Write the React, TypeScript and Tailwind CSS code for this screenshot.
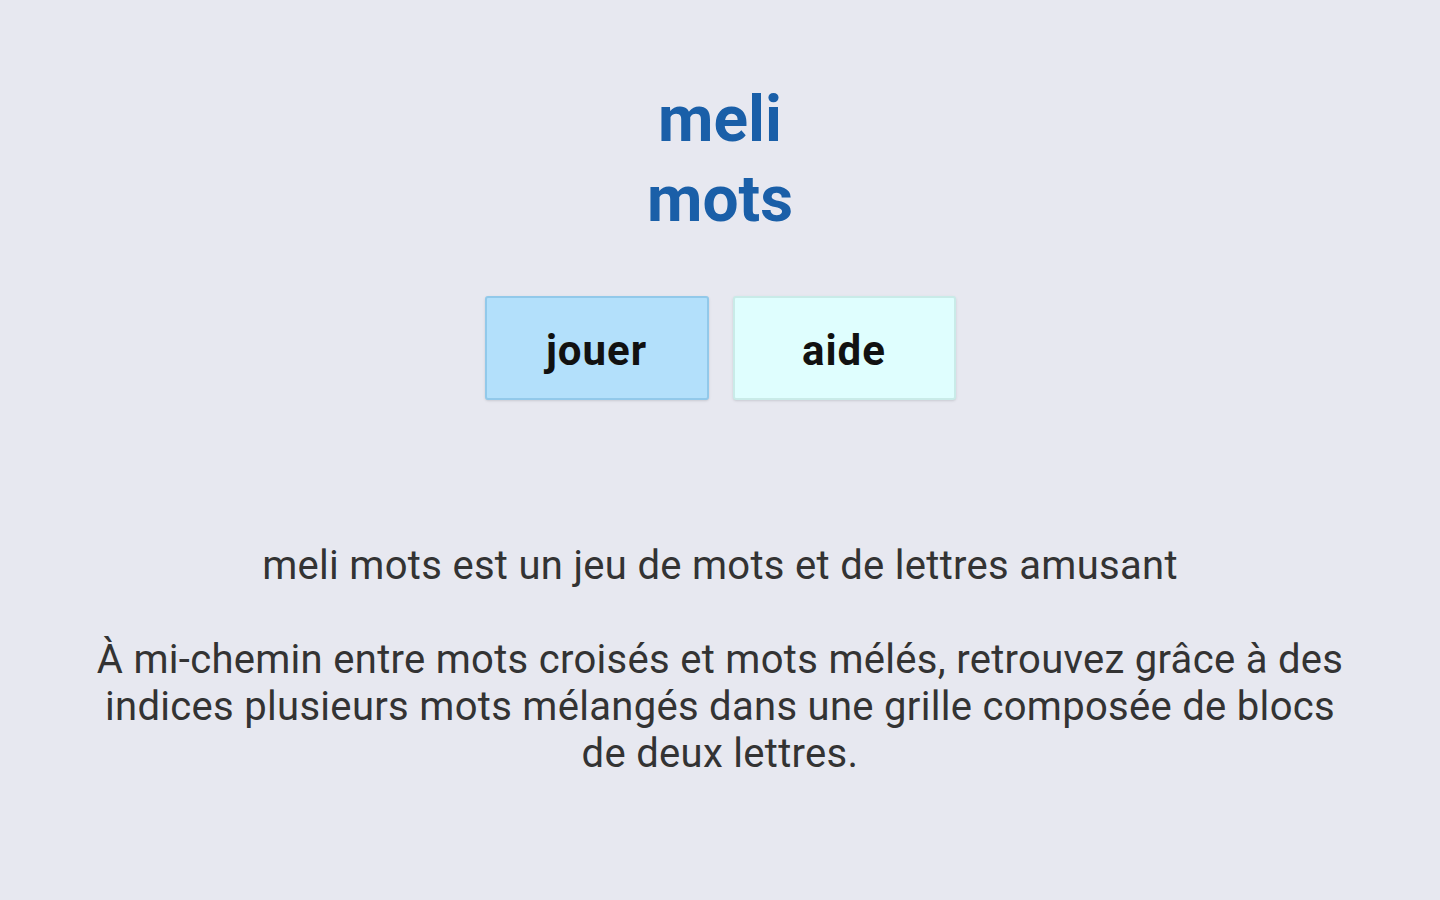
export default function App() {
  return (
    <div
      className="min-h-[900px] w-full bg-[#e7e8f0] flex flex-col items-center"
      style={{ fontFamily: "Roboto, 'Liberation Sans', sans-serif" }}
    >
      <h1 className="mt-[80px] text-[64px] leading-[80px] font-bold text-[#1a5fa8] text-center">
        meli
        <br />
        mots
      </h1>

      <div className="mt-[56px] flex gap-6">
        <button className="w-[224px] h-[104px] pt-[4px] rounded-[3px] border-2 border-[#92c9ea] bg-[#b3e0fb] text-[42px] font-bold tracking-[1px] text-[#111] shadow-sm">
          jouer
        </button>
        <button className="w-[223px] h-[104px] pt-[4px] rounded-[3px] border-2 border-[#c9ebe8] bg-[#dffefe] text-[42px] font-bold tracking-[1px] text-[#111] shadow-sm">
          aide
        </button>
      </div>

      <div className="mt-[142px] px-[80px] text-center text-[40px] leading-[47px] tracking-[0.3px] text-[#333]">
        <p>meli mots est un jeu de mots et de lettres amusant</p>
        <p className="mt-[47px]">
          À mi-chemin entre mots croisés et mots mélés, retrouvez grâce à des indices plusieurs mots
          mélangés dans une grille composée de blocs de deux lettres.
        </p>
      </div>
    </div>
  );
}
